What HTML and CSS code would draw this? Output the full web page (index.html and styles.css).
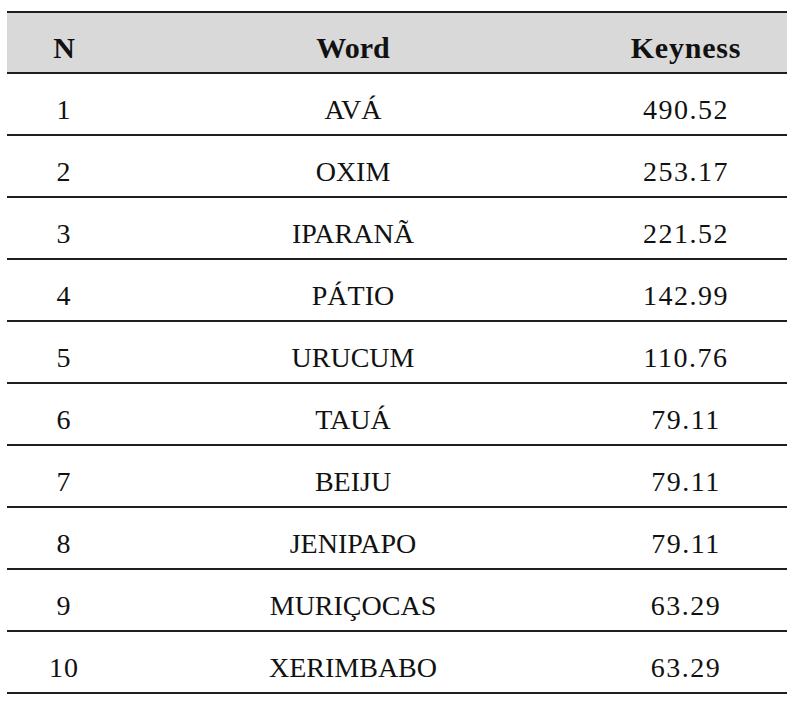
FILE: index.html
```html
<!DOCTYPE html>
<html>
<head>
<meta charset="utf-8">
<link rel="stylesheet" href="styles.css">
</head>
<body>
<table class="keyness">
  <thead>
    <tr><th class="c-n">N</th><th class="c-w">Word</th><th class="c-k">Keyness</th></tr>
  </thead>
  <tbody>
    <tr><td>1</td><td>AVÁ</td><td>490.52</td></tr>
    <tr><td>2</td><td>OXIM</td><td>253.17</td></tr>
    <tr><td>3</td><td>IPARANÃ</td><td>221.52</td></tr>
    <tr><td>4</td><td>PÁTIO</td><td>142.99</td></tr>
    <tr><td>5</td><td>URUCUM</td><td>110.76</td></tr>
    <tr><td>6</td><td>TAUÁ</td><td>79.11</td></tr>
    <tr><td>7</td><td>BEIJU</td><td>79.11</td></tr>
    <tr><td>8</td><td>JENIPAPO</td><td>79.11</td></tr>
    <tr><td>9</td><td>MURIÇOCAS</td><td>63.29</td></tr>
    <tr><td>10</td><td>XERIMBABO</td><td>63.29</td></tr>
  </tbody>
</table>
</body>
</html>
```
FILE: styles.css
```css
html, body {
  margin: 0;
  padding: 0;
  background: #ffffff;
}
body {
  padding: 11px 7px 0 7px;
  font-family: "Liberation Serif", "DejaVu Serif", serif;
  color: #111;
}
.keyness {
  width: 780px;
  border-collapse: collapse;
  table-layout: fixed;
}
.keyness th,
.keyness td {
  height: 49px;
  padding: 11px 0 0 0;
  text-align: center;
  vertical-align: middle;
  border-bottom: 2px solid #1e1e1e;
  font-size: 28px;
  line-height: 34px;
}
.keyness td:first-child {
  letter-spacing: 1px;
}
.keyness td:last-child {
  letter-spacing: 1.5px;
}
.keyness thead th {
  background: #d9d9d9;
  border-top: 2px solid #1e1e1e;
  font-weight: bold;
  font-size: 30px;
  height: 49px;
  padding-top: 10px;
}
.keyness thead th.c-k {
  letter-spacing: 0.8px;
}
.c-n { width: 114px; }
.c-w { width: 464px; }
.c-k { width: 202px; }
```
